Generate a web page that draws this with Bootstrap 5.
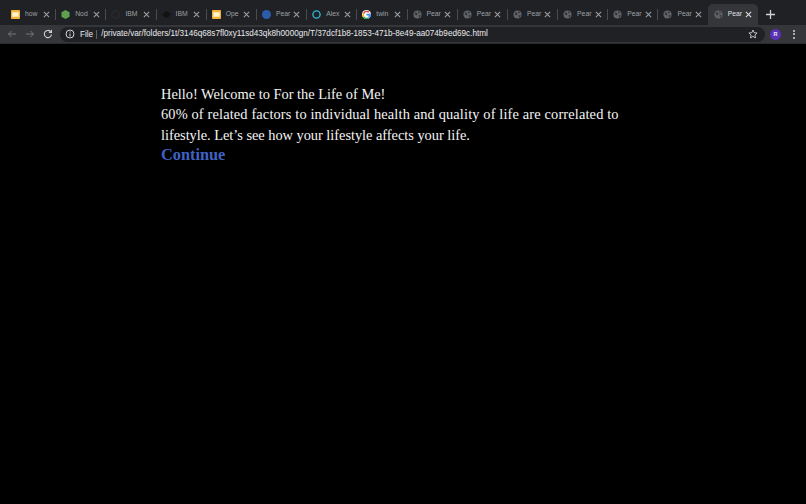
<!DOCTYPE html>
<html lang="en">
<head>
<meta charset="utf-8">
<title>For the Life of Me</title>
<link href="https://cdn.jsdelivr.net/npm/bootstrap@5.3.0/dist/css/bootstrap.min.css" rel="stylesheet">
<style>
html, body { background: #000; height: 100%; }
body { font-family: "Liberation Sans", Arial, sans-serif; overflow: hidden; }
.tabstrip { height: 25px; background: #202124; padding: 4px 0 0 5px; }
.browsertab { width: 50.2px; height: 21px; padding: 0 4px 0 6px; gap: 5px; color: #9aa0a6; font-size: 6.8px; position: relative; flex: none; }
.browsertab + .browsertab::before { content: ""; position: absolute; left: 0; top: 5px; height: 11px; width: 1px; background: #4a4c50; }
.browsertab.current { background: #35363a; border-radius: 5px 5px 0 0; color: #dfe1e5; }
.browsertab.current::before, .browsertab.current + .browsertab::before { display: none; }
.tabico { width: 9px; height: 9px; flex: none; display: block; }
.tabname { width: 14px; white-space: nowrap; flex: none; }
.tabx { width: 7px; height: 7px; flex: none; margin-left: -1.5px; display: block; }
.newtab { width: 9px; height: 9px; margin: 6px 0 0 8px; flex: none; display: block; }
.toolbar { height: 19px; background: #35363a; padding: 0 0 0 7px; border-bottom: 1px solid #2a2b2e; }
.navico { width: 10px; height: 10px; flex: none; display: block; margin-right: 8px; }
.omnibox { width: 705px; height: 15px; margin-left: -1px; background: #202124; border-radius: 8px; padding: 0 7px 0 5px; color: #e8eaed; font-size: 8.17px; white-space: nowrap; }
.omniinfo { margin-right: 5px; }
.omnilabel { padding-right: 3px; margin-right: 4px; border-right: 1px solid #5f6368; line-height: 9px; }
.starico { margin-right: 0; margin-left: auto; }
.avatar { width: 11px; height: 11px; border-radius: 50%; background: #5a32b8; color: #e8eaed; font-size: 5.5px; font-weight: 700; margin-left: 5px; flex: none; }
.kebab { width: 2px; margin-left: 12px; flex: none; gap: 1.5px; }
.kebab i { width: 2px; height: 2px; background: #d0d2d6; border-radius: 50%; display: block; }
.welcome { margin: 40px 0 0 161px; width: 480px; color: #f4f4f4; font-family: "Liberation Serif", serif; font-size: 14.4px; line-height: 20.35px; }
.welcome a { display: block; color: #3f62c4; font-weight: 700; font-size: 16.3px; text-decoration: none; }
.lineone { display: block; letter-spacing: .14px; white-space: nowrap; }
.linetwo { display: block; letter-spacing: -.03px; white-space: nowrap; }
</style>
</head>
<body>
<svg width="0" height="0" class="position-absolute">
  <defs>
    <symbol id="ix" viewBox="0 0 8 8"><path d="M1 1l6 6M7 1L1 7" stroke="currentColor" stroke-width="1.2" fill="none"/></symbol>
    <symbol id="iglobe" viewBox="0 0 10 10"><circle cx="5" cy="5" r="4.5" fill="#5f6368"/><path d="M2 2.5l2 .5 1 2-2 1zM6 1l2 2-2 1zM6 6l2.5-.5L7 8.500z" fill="#2d2e31"/></symbol>
    <symbol id="imail" viewBox="0 0 10 10"><rect width="10" height="10" rx="1" fill="#f4b43c"/><rect x="1.500" y="2.500" width="7" height="5" fill="#fff3d0"/></symbol>
  </defs>
</svg>

<div class="tabstrip d-flex">
  <div class="browsertab d-flex align-items-center"><svg class="tabico"><use href="#imail"/></svg><span class="tabname">how</span><svg class="tabx"><use href="#ix"/></svg></div>
  <div class="browsertab d-flex align-items-center"><svg class="tabico" viewBox="0 0 10 10"><path d="M5 0l4.500 2.500v5L5 10 .5 7.500v-5z" fill="#5fa04e"/></svg><span class="tabname">Nod</span><svg class="tabx"><use href="#ix"/></svg></div>
  <div class="browsertab d-flex align-items-center"><svg class="tabico" viewBox="0 0 10 10"><circle cx="5" cy="5" r="4" fill="none" stroke="#2b2c2f" stroke-width="1.500"/></svg><span class="tabname">IBM</span><svg class="tabx"><use href="#ix"/></svg></div>
  <div class="browsertab d-flex align-items-center"><svg class="tabico" viewBox="0 0 10 10"><path d="M0 5h10M5 1v8M3 3h4v4H3z" stroke="#111214" stroke-width="1.500" fill="#111214"/></svg><span class="tabname">IBM</span><svg class="tabx"><use href="#ix"/></svg></div>
  <div class="browsertab d-flex align-items-center"><svg class="tabico"><use href="#imail"/></svg><span class="tabname">Ope</span><svg class="tabx"><use href="#ix"/></svg></div>
  <div class="browsertab d-flex align-items-center"><svg class="tabico" viewBox="0 0 10 10"><circle cx="5" cy="5" r="5" fill="#2a5caa"/></svg><span class="tabname">Pear</span><svg class="tabx"><use href="#ix"/></svg></div>
  <div class="browsertab d-flex align-items-center"><svg class="tabico" viewBox="0 0 10 10"><circle cx="5" cy="5" r="4" fill="none" stroke="#2fb5d8" stroke-width="1.500"/></svg><span class="tabname">Alex</span><svg class="tabx"><use href="#ix"/></svg></div>
  <div class="browsertab d-flex align-items-center"><svg class="tabico" viewBox="0 0 10 10"><circle cx="5" cy="5" r="5" fill="#fff"/><path d="M5 2.200a2.800 2.800 0 0 1 2 .8L8.300 1.700A5 5 0 0 0 1 3.500l1.500 1A2.800 2.800 0 0 1 5 2.200z" fill="#ea4335"/><path d="M2.500 4.500L1 3.500a5 5 0 0 0 .2 4.800l1.500-1a2.800 2.800 0 0 1-.2-2.800z" fill="#fbbc05"/><path d="M2.700 7.300l-1.500 1A5 5 0 0 0 8 9l-1.300-1a2.800 2.800 0 0 1-4-.7z" fill="#34a853"/><path d="M5 4.200V6h2.500a2.300 2.300 0 0 1-.8 2L8 9a5 5 0 0 0 1.800-4.800z" fill="#4285f4"/></svg><span class="tabname">twin</span><svg class="tabx"><use href="#ix"/></svg></div>
  <div class="browsertab d-flex align-items-center"><svg class="tabico"><use href="#iglobe"/></svg><span class="tabname">Pear</span><svg class="tabx"><use href="#ix"/></svg></div>
  <div class="browsertab d-flex align-items-center"><svg class="tabico"><use href="#iglobe"/></svg><span class="tabname">Pear</span><svg class="tabx"><use href="#ix"/></svg></div>
  <div class="browsertab d-flex align-items-center"><svg class="tabico"><use href="#iglobe"/></svg><span class="tabname">Pear</span><svg class="tabx"><use href="#ix"/></svg></div>
  <div class="browsertab d-flex align-items-center"><svg class="tabico"><use href="#iglobe"/></svg><span class="tabname">Pear</span><svg class="tabx"><use href="#ix"/></svg></div>
  <div class="browsertab d-flex align-items-center"><svg class="tabico"><use href="#iglobe"/></svg><span class="tabname">Pear</span><svg class="tabx"><use href="#ix"/></svg></div>
  <div class="browsertab d-flex align-items-center"><svg class="tabico"><use href="#iglobe"/></svg><span class="tabname">Pear</span><svg class="tabx"><use href="#ix"/></svg></div>
  <div class="browsertab current d-flex align-items-center"><svg class="tabico"><use href="#iglobe"/></svg><span class="tabname">Pear</span><svg class="tabx"><use href="#ix"/></svg></div>
  <svg class="newtab" viewBox="0 0 9 9"><path d="M4.500 0v9M0 4.500h9" stroke="#d0d2d6" stroke-width="1.300"/></svg>
</div>

<div class="toolbar d-flex align-items-center">
  <svg class="navico" viewBox="0 0 10 10"><path d="M9 5H1.500M4.500 2L1.500 5l3 3" stroke="#74767a" stroke-width="1" fill="none"/></svg>
  <svg class="navico" viewBox="0 0 10 10"><path d="M1 5h7.500M5.500 2l3 3-3 3" stroke="#74767a" stroke-width="1" fill="none"/></svg>
  <svg class="navico" viewBox="0 0 10 10"><path d="M8.500 5.500A3.600 3.600 0 1 1 7.500 2.500" stroke="#d0d2d6" stroke-width="1.100" fill="none"/><path d="M9 .5v3.500H5.500z" fill="#d0d2d6"/></svg>
  <div class="omnibox d-flex align-items-center">
    <svg class="navico omniinfo" viewBox="0 0 10 10"><circle cx="5" cy="5" r="4" stroke="#d0d2d6" fill="none"/><path d="M5 4.500v3M5 2.500v1" stroke="#d0d2d6"/></svg>
    <span class="omnilabel">File</span>
    <span>/private/var/folders/1t/3146q68s7fl0xy11sd43qk8h0000gn/T/37dcf1b8-1853-471b-8e49-aa074b9ed69c.html</span>
    <svg class="navico starico" viewBox="0 0 10 10"><path d="M5 1l1.200 2.700 2.900.3-2.200 2 .6 2.900L5 7.400 2.500 8.900l.6-2.900-2.200-2 2.900-.3z" stroke="#d0d2d6" fill="none" stroke-width=".9"/></svg>
  </div>
  <div class="avatar d-flex align-items-center justify-content-center">R</div>
  <div class="kebab d-flex flex-column"><i></i><i></i><i></i></div>
</div>

<main class="welcome">
  <div>Hello! Welcome to For the Life of Me!</div>
  <div><span class="lineone">60% of related factors to individual health and quality of life are correlated to</span> <span class="linetwo">lifestyle. Let’s see how your lifestyle affects your life.</span></div>
  <a href="#">Continue</a>
</main>
<script src="https://cdn.jsdelivr.net/npm/bootstrap@5.3.0/dist/js/bootstrap.bundle.min.js"></script>
</body>
</html>
